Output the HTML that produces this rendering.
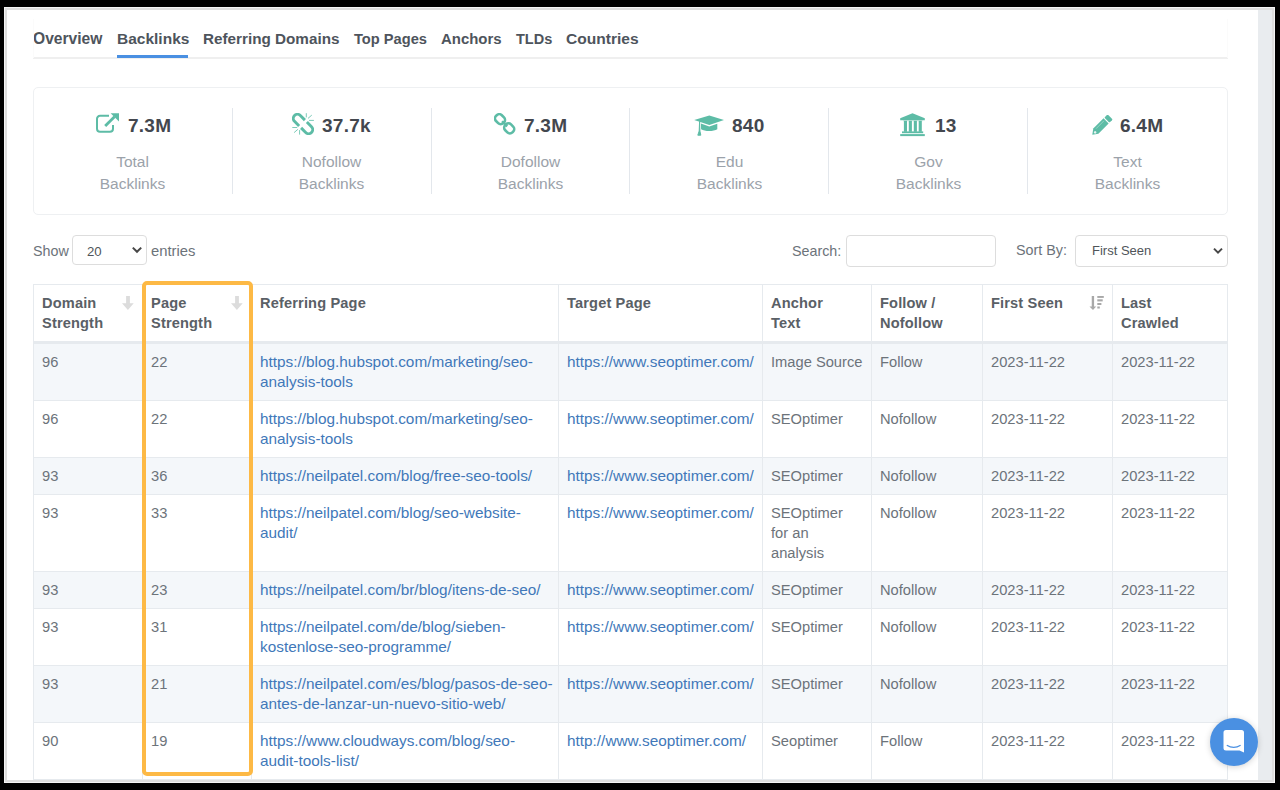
<!DOCTYPE html>
<html><head><meta charset="utf-8">
<style>
*{box-sizing:border-box;margin:0;padding:0}
html,body{width:1280px;height:790px;overflow:hidden;background:#000;font-family:"Liberation Sans",sans-serif}
#win{position:absolute;left:4px;top:7px;width:1271px;height:776px;background:#fff;border:1px solid #f4f4f4;overflow:hidden}
#frame{position:absolute;left:0;top:0;right:0;bottom:0;border:2px solid #dedede;border-left-width:2px}
#strip{position:absolute;left:1253px;top:2px;width:14px;bottom:2px;background:#e9ecef}
.abs{position:absolute}
/* tabs */
#tabs{position:absolute;left:33px;top:30px;width:1195px;height:29px;border-bottom:2px solid #efefef}
#tabs span{position:absolute;top:0;font-weight:700;font-size:15.1px;color:#4e545c;line-height:18px;white-space:nowrap}
#tabul{position:absolute;left:117px;top:55px;width:71px;height:3px;background:#4a90e2}
/* stats */
#stats{position:absolute;left:33px;top:87px;width:1195px;height:128px;border:1px solid #eef0f2;border-radius:5px}
.div{position:absolute;top:108px;width:1px;height:86px;background:#e3e7ec}
.num{position:absolute;top:115px;height:22px;font-weight:700;font-size:19px;letter-spacing:0.25px;color:#43474e;white-space:nowrap;line-height:22px}
.lab{position:absolute;top:151px;width:199px;text-align:center;font-size:15.5px;color:#9ba2aa;line-height:22px}
/* controls */
.ctl{position:absolute;font-size:14.3px;color:#6c737a;white-space:nowrap;line-height:18px}
.box{position:absolute;border:1px solid #dddddd;border-radius:4px;background:#fff}
/* table */
#tbl{position:absolute;left:33px;top:284px;width:1195px;border-collapse:collapse;table-layout:fixed;font-size:14.7px;color:#6c737a}
#tbl td,#tbl th{border:1px solid #e6eaee;padding:8px 8px 8px 8px;vertical-align:top;line-height:20px;text-align:left;white-space:nowrap}
#tbl th{font-weight:700;color:#5a6066;font-size:14.6px;letter-spacing:0.15px;border-bottom:3px solid #e6eaee;position:relative}
#tbl tr.s td{background:#f4f7fa}
#tbl a{color:#4178b9;text-decoration:none;font-size:15.35px}
#orange{position:absolute;left:142px;top:281px;width:111px;height:495px;border:4px solid #fdb945;border-radius:5px}
#chat{position:absolute;left:1210px;top:718px;width:48px;height:48px;border-radius:50%;background:#4a90e2;box-shadow:0 1px 6px rgba(0,0,0,.18)}
</style></head>
<body>
<div id="win"><div id="frame"></div><div id="strip"></div></div>

<div id="tabs">
<span style="left:0;font-size:15.6px">Overview</span>
<span style="left:84px;font-size:15.5px">Backlinks</span>
<span style="left:170px;font-size:15.25px">Referring Domains</span>
<span style="left:321px;font-size:14.65px">Top Pages</span>
<span style="left:408px;font-size:14.95px">Anchors</span>
<span style="left:483px;font-size:14.5px">TLDs</span>
<span style="left:533px;font-size:15.55px">Countries</span>
</div>
<div class="abs" style="left:33px;top:19px;width:1195px;height:39px;border-left:1px solid #fbfbfb;border-right:1px solid #fbfbfb"></div>
<div id="tabul"></div>

<div id="stats"></div>
<div class="div" style="left:232px"></div>
<div class="div" style="left:431px"></div>
<div class="div" style="left:629px"></div>
<div class="div" style="left:828px"></div>
<div class="div" style="left:1027px"></div>

<div class="lab" style="left:33px">Total<br>Backlinks</div>
<div class="lab" style="left:232px">Nofollow<br>Backlinks</div>
<div class="lab" style="left:431px">Dofollow<br>Backlinks</div>
<div class="lab" style="left:630px">Edu<br>Backlinks</div>
<div class="lab" style="left:829px">Gov<br>Backlinks</div>
<div class="lab" style="left:1028px">Text<br>Backlinks</div>

<div class="num" style="left:128px">7.3M</div>
<div class="num" style="left:322px">37.7k</div>
<div class="num" style="left:524px">7.3M</div>
<div class="num" style="left:732px">840</div>
<div class="num" style="left:935px">13</div>
<div class="num" style="left:1120px">6.4M</div>

<div class="ctl" style="left:33px;top:242px">Show</div>
<div class="box" style="left:72px;top:235px;width:75px;height:30px"></div>
<div class="ctl" style="left:87px;top:243px;font-size:13.2px;color:#50555a">20</div>
<div class="ctl" style="left:151px;top:242px;font-size:14.8px">entries</div>
<div class="ctl" style="left:792px;top:242px">Search:</div>
<div class="box" style="left:846px;top:235px;width:150px;height:32px"></div>
<div class="ctl" style="left:1016px;top:241px">Sort By:</div>
<div class="box" style="left:1075px;top:235px;width:153px;height:32px"></div>
<div class="ctl" style="left:1092px;top:241.5px;font-size:13px;color:#50555a">First Seen</div>

<table id="tbl">
<colgroup><col style="width:109px"><col style="width:109px"><col style="width:307px"><col style="width:204px"><col style="width:109px"><col style="width:111px"><col style="width:130px"><col style="width:115px"></colgroup>
<tr><th>Domain<br>Strength</th><th>Page<br>Strength</th><th>Referring Page</th><th>Target Page</th><th>Anchor<br>Text</th><th>Follow /<br>Nofollow</th><th>First Seen</th><th>Last<br>Crawled</th></tr>
<tr class="s"><td>96</td><td>22</td><td><a>https://blog.hubspot.com/marketing/seo-<br>analysis-tools</a></td><td><a>https://www.seoptimer.com/</a></td><td>Image Source</td><td>Follow</td><td>2023-11-22</td><td>2023-11-22</td></tr>
<tr><td>96</td><td>22</td><td><a>https://blog.hubspot.com/marketing/seo-<br>analysis-tools</a></td><td><a>https://www.seoptimer.com/</a></td><td>SEOptimer</td><td>Nofollow</td><td>2023-11-22</td><td>2023-11-22</td></tr>
<tr class="s"><td>93</td><td>36</td><td><a>https://neilpatel.com/blog/free-seo-tools/</a></td><td><a>https://www.seoptimer.com/</a></td><td>SEOptimer</td><td>Nofollow</td><td>2023-11-22</td><td>2023-11-22</td></tr>
<tr><td>93</td><td>33</td><td><a>https://neilpatel.com/blog/seo-website-<br>audit/</a></td><td><a>https://www.seoptimer.com/</a></td><td>SEOptimer<br>for an<br>analysis</td><td>Nofollow</td><td>2023-11-22</td><td>2023-11-22</td></tr>
<tr class="s"><td>93</td><td>23</td><td><a>https://neilpatel.com/br/blog/itens-de-seo/</a></td><td><a>https://www.seoptimer.com/</a></td><td>SEOptimer</td><td>Nofollow</td><td>2023-11-22</td><td>2023-11-22</td></tr>
<tr><td>93</td><td>31</td><td><a>https://neilpatel.com/de/blog/sieben-<br>kostenlose-seo-programme/</a></td><td><a>https://www.seoptimer.com/</a></td><td>SEOptimer</td><td>Nofollow</td><td>2023-11-22</td><td>2023-11-22</td></tr>
<tr class="s"><td>93</td><td>21</td><td><a>https://neilpatel.com/es/blog/pasos-de-seo-<br>antes-de-lanzar-un-nuevo-sitio-web/</a></td><td><a>https://www.seoptimer.com/</a></td><td>SEOptimer</td><td>Nofollow</td><td>2023-11-22</td><td>2023-11-22</td></tr>
<tr><td>90</td><td>19</td><td><a>https://www.cloudways.com/blog/seo-<br>audit-tools-list/</a></td><td><a>http://www.seoptimer.com/</a></td><td>Seoptimer</td><td>Follow</td><td>2023-11-22</td><td>2023-11-22</td></tr>
</table>


<svg class="abs" style="left:96px;top:113px" width="24" height="21" viewBox="0 0 24 21">
 <path d="M13 2.8 H4 A3 3 0 0 0 1 5.8 V15.8 A3 3 0 0 0 4 18.8 H14 A3 3 0 0 0 17 15.8 V12" fill="none" stroke="#5dbca6" stroke-width="2"/>
 <path d="M9.2 13 L18.5 3.7" stroke="#5dbca6" stroke-width="2.8"/>
 <path d="M14.6 0.2 H23 V8.6 Z" fill="#5dbca6"/>
</svg>
<svg class="abs" style="left:292px;top:113px" width="22" height="22" viewBox="0 0 22 22">
 <g transform="translate(11 11) rotate(45)" fill="none" stroke="#5dbca6" stroke-width="2.9">
  <path d="M-1.4 -4.1 H-7.9 A4.1 4.1 0 0 0 -7.9 4.1 H-1.4"/>
  <path d="M1.4 -4.1 H7.9 A4.1 4.1 0 0 1 7.9 4.1 H1.4"/>
 </g>
 <g stroke="#7ccbb9" stroke-width="1">
  <path d="M14.3 0.2 V4.4 M16 5.4 L19.8 2.1 M17 7.4 H21.9"/>
  <path d="M0.3 14.5 H5.2 M2.1 19.6 L5.9 16.3 M7.6 17.1 V21.6"/>
 </g>
</svg>
<svg class="abs" style="left:494px;top:113px" width="22" height="22" viewBox="0 0 22 22">
 <g transform="translate(10.6 10.8) rotate(45)" fill="none" stroke="#5dbca6" stroke-width="2.6">
  <rect x="-11.6" y="-4.1" width="10.2" height="8.2" rx="3.6"/>
  <rect x="1.4" y="-4.1" width="10.2" height="8.2" rx="3.6"/>
  <path d="M-3.6 0 H3.6" stroke-width="2.4"/>
 </g>
</svg>
<svg class="abs" style="left:694px;top:114.5px" width="31" height="21" viewBox="0 0 31 21">
 <path d="M0.2 5 L15.3 0.6 L30 5 L15.3 10 Z" fill="#5dbca6"/>
 <path d="M6.9 8.6 L15.3 11.6 L23.3 8.8 V14.2 C20 16.4 11 16.8 7.1 14.2 Z" fill="#5dbca6"/>
 <path d="M5.6 6.3 L5.2 16 L3.8 20.2 H6.8 L5.9 16 Z" fill="#5dbca6" stroke="#5dbca6" stroke-width="1"/>
</svg>
<svg class="abs" style="left:900px;top:113px" width="25" height="24" viewBox="0 0 25 24">
 <path d="M0.2 5.2 L12.5 0.2 L24.8 5.2 V7.3 H0.2 Z" fill="#5dbca6"/>
 <rect x="3" y="7.2" width="19.6" height="1" fill="#b5e0d5"/>
 <rect x="3.9" y="7.8" width="3.1" height="11" fill="#5dbca6"/>
 <rect x="8.8" y="7.8" width="3.1" height="11" fill="#5dbca6"/>
 <rect x="13.8" y="7.8" width="3.1" height="11" fill="#5dbca6"/>
 <rect x="18.7" y="7.8" width="3.1" height="11" fill="#5dbca6"/>
 <rect x="2" y="18.4" width="21.2" height="1.8" fill="#5dbca6"/>
 <rect x="0.2" y="21.1" width="24.6" height="2" fill="#5dbca6"/>
</svg>
<svg class="abs" style="left:1092px;top:115px" width="21" height="21" viewBox="0 0 21 21">
 <g transform="translate(0.3 19.7) rotate(-45)" fill="#5dbca6">
  <path d="M0 0 L5 -3.6 H19.5 V3.6 H5 Z"/>
  <rect x="20.6" y="-3.6" width="4.6" height="7.2" rx="1"/>
  <path d="M7 -1.6 H18" stroke="#a8dccf" stroke-width="0.7"/>
  <circle cx="3.6" cy="0.4" r="1.3" fill="#ffffff" opacity="0.85"/>
 </g>
</svg>

<svg class="abs" style="left:121px;top:295px" width="14" height="16" viewBox="0 0 14 16">
 <path d="M5.1 1 H8.9 V8.3 H12.7 L6.9 15 L1 8.3 H5.1 Z" fill="#dcdcdc"/>
</svg>
<svg class="abs" style="left:230px;top:295px" width="14" height="16" viewBox="0 0 14 16">
 <path d="M5.1 1 H8.9 V8.3 H12.7 L6.9 15 L1 8.3 H5.1 Z" fill="#dcdcdc"/>
</svg>
<svg class="abs" style="left:1089px;top:295px" width="16" height="16" viewBox="0 0 16 16">
 <path d="M2.75 1 H5.1 V11.5 H7.2 L4 15 L0.5 11.5 H2.75 Z" fill="#a8a8a8"/>
 <rect x="8.3" y="1" width="6.5" height="1.9" fill="#a8a8a8"/>
 <rect x="8.3" y="4.3" width="5.4" height="2.1" fill="#a8a8a8"/>
 <rect x="8.3" y="8" width="4.1" height="2" fill="#a8a8a8"/>
 <rect x="8.3" y="11.5" width="2.5" height="2" fill="#a8a8a8"/>
</svg>
<svg class="abs" style="left:131px;top:245px" width="12" height="10" viewBox="0 0 12 10">
 <path d="M1.8 2.6 L6 6.8 L10.2 2.6" fill="none" stroke="#474747" stroke-width="2"/>
</svg>
<svg class="abs" style="left:1212px;top:246px" width="12" height="10" viewBox="0 0 12 10">
 <path d="M2 2.6 L6 6.6 L10 2.6" fill="none" stroke="#474747" stroke-width="2"/>
</svg>
<div id="orange"></div>
<div id="chat"><svg style="position:absolute;left:13px;top:11px" width="23" height="26" viewBox="0 0 23 26">
 <path d="M3 1 H18.5 A2.5 2.5 0 0 1 21 3.5 V23.6 L16.5 21.4 H3 A2.5 2.5 0 0 1 0.5 18.9 V3.5 A2.5 2.5 0 0 1 3 1 Z" fill="#fff"/>
 <path d="M3.8 16.2 Q10.7 20.6 17.6 16.2" fill="none" stroke="#4a90e2" stroke-width="1.3"/>
</svg></div>
</body></html>
